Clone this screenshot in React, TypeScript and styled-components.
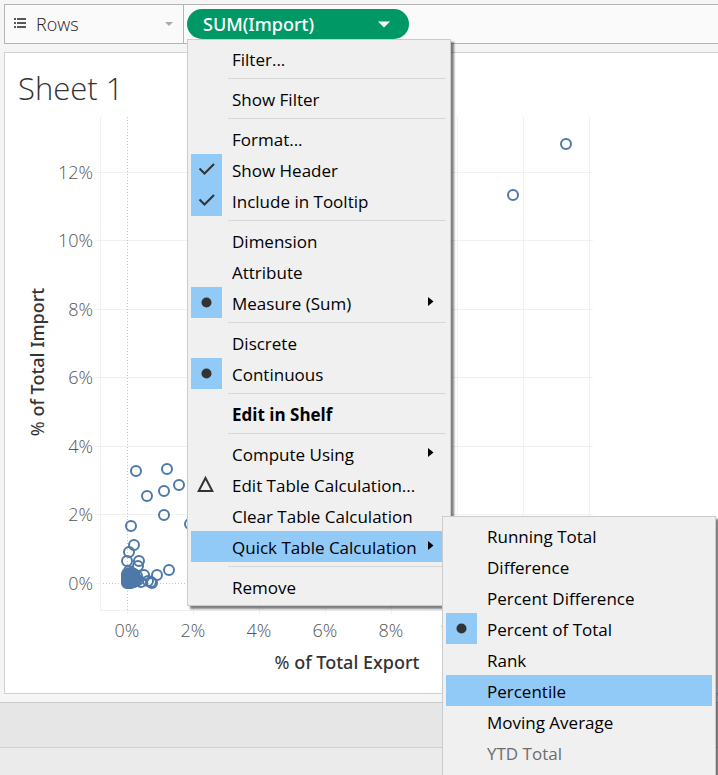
import React from 'react';
import styled, { createGlobalStyle, css } from 'styled-components';

const colors = {
  page: '#f5f5f5',
  menu: '#f0f0f0',
  highlight: '#91c9f7',
  pill: '#009966',
  mark: '#4e79a7',
  grid: '#f0f0f0',
};

const GlobalStyle = createGlobalStyle`
  * { box-sizing: border-box; }
  html, body { height: 100%; }
  body {
    margin: 0;
    overflow: hidden;
    background: ${colors.page};
    font-family: "Open Sans", "Noto Sans", sans-serif;
    color: #333;
  }
  button { font: inherit; color: inherit; border: 0; padding: 0; background: none; text-align: left; }
`;

const Page = styled.div`
  min-height: 100vh;
  display: flex;
  flex-direction: column;
`;

const Workspace = styled.main`
  display: flex;
  flex-direction: column;
  gap: 8px;
  padding: 4px 0 8px 4px;
`;

const Shelf = styled.section`
  display: flex;
  height: 40px;
  border: 1px solid #b4b4b4;
  border-right: 0;
  background: #fafafa;
`;

const ShelfLabel = styled.button`
  display: flex;
  align-items: center;
  width: 179px;
  padding: 0 10px 0 9px;
  gap: 10px;
  border-right: 1px solid #b4b4b4;
  color: #222;
  font-size: 18px;
  font-weight: 300;
`;

const ShelfName = styled.span`
  flex: 1;
`;

const ShelfBody = styled.div`
  flex: 1;
  padding: 4px 3px;
`;

const PillAnchor = styled.div`
  position: relative;
  width: 222px;
`;

const Pill = styled.button`
  display: flex;
  align-items: center;
  justify-content: space-between;
  width: 100%;
  height: 30px;
  padding: 0 19px 0 16px;
  border-radius: 15px;
  background: ${colors.pill};
  color: #fff;
  font-family: "Noto Sans", sans-serif;
  font-size: 18px;
  font-weight: 500;
`;

const menuSurface = css`
  position: absolute;
  padding: 3px;
  border: 1px solid #ccc;
  background: ${colors.menu};
  box-shadow: 3px 3px 2px rgba(0, 0, 0, 0.5);
  color: #000;
  font-size: 17px;
`;

const Menu = styled.div`
  ${menuSurface}
  top: 100%;
  left: 0;
  width: 264px;
  z-index: 1;
`;

const SubMenu = styled.div`
  ${menuSurface}
  top: -15px;
  left: 251px;
  width: 274px;
  padding-bottom: 40px;
  z-index: 2;
`;

const ItemSlot = styled.div`
  position: relative;
`;

const Item = styled.button<{ $active?: boolean; $strong?: boolean }>`
  display: flex;
  align-items: center;
  width: 100%;
  height: 31px;
  padding-right: 13px;
  gap: 10px;
  background: ${(p) => (p.$active ? colors.highlight : 'transparent')};
  font-weight: ${(p) => (p.$strong ? 700 : 400)};
  white-space: nowrap;

  &:disabled { color: #6d6d6d; }
`;

const Gutter = styled.span<{ $checked: boolean }>`
  display: flex;
  align-items: center;
  justify-content: center;
  width: 31px;
  height: 31px;
  background: ${(p) => (p.$checked ? colors.highlight : 'transparent')};
`;

const ItemText = styled.span`
  flex: 1;
  padding-top: 2px;
`;

const Separator = styled.hr`
  height: 1px;
  margin: 4px 1px 4px 37px;
  border: 0;
  background: #d7d7d7;
`;

const Sheet = styled.section`
  border: 1px solid #d0d0d0;
  border-right: 0;
  background: #fff;
`;

const SheetTitle = styled.h1`
  margin: 0;
  padding: 15px 13px 4px;
  font-size: 31px;
  line-height: 40px;
  font-weight: 300;
`;

const Chart = styled.svg`
  display: block;
  width: 600px;
  height: 581px;
`;

const Tick = styled.text`
  font-size: 18px;
  font-weight: 300;
  fill: #555;
`;

const AxisTitle = styled.text`
  font-family: "Noto Sans", sans-serif;
  font-size: 18px;
  font-weight: 500;
  fill: #333;
  text-anchor: middle;
`;

const AxisUnit = styled.tspan`
  font-weight: 400;
`;

const TabStrip = styled.footer`
  height: 46px;
  border-top: 1px solid #c8c8c8;
  border-bottom: 1px solid #d0d0d0;
  background: #e6e6e6;
`;

const StatusBar = styled.div`
  flex: 1;
  background: #ebebeb;
`;

const ListIcon = () => (
  <svg width="12" height="12" viewBox="0 0 12 12" fill="#5a5559" aria-hidden="true">
    <path d="M0 0h2v2H0zM3 0h9v2H3zM0 4h2v2H0zM3 4h9v2H3zM0 8h2v2H0zM3 8h9v2H3z" />
  </svg>
);

const ShelfCaret = () => (
  <svg width="8" height="4" viewBox="0 0 8 4" fill="#aaa" aria-hidden="true">
    <path d="M0 0h8L4 4z" />
  </svg>
);

const PillCaret = () => (
  <svg width="12" height="7" viewBox="0 0 12 7" fill="#fff" aria-hidden="true">
    <path d="M0 0.5h12L6 6.5z" />
  </svg>
);

const SubmenuArrow = () => (
  <svg width="6" height="11" viewBox="0 0 6 11" aria-hidden="true">
    <path d="M0 0l5.5 4.5L0 9z" />
  </svg>
);

type Mark = 'check' | 'dot' | 'delta';

const MarkIcon = ({ mark }: { mark: Mark }) => (
  <svg width="19" height="19" viewBox="0 0 19 19" fill="none" stroke="#333" strokeWidth="2" aria-hidden="true">
    {mark === 'check' && <path d="M2.5 8.5l5 5L17 4" />}
    {mark === 'dot' && <circle cx="9.5" cy="9.5" r="5" fill="#333" stroke="none" />}
    {mark === 'delta' && <path d="M8.5 3L15.3 16H1.7z" />}
  </svg>
);

type Entry = {
  text: string;
  mark?: Mark;
  strong?: boolean;
  active?: boolean;
  disabled?: boolean;
  submenu?: boolean;
  children?: Entry[];
};

const quickCalculations: Entry[] = [
  { text: 'Running Total' },
  { text: 'Difference' },
  { text: 'Percent Difference' },
  { text: 'Percent of Total', mark: 'dot' },
  { text: 'Rank' },
  { text: 'Percentile', active: true },
  { text: 'Moving Average' },
  { text: 'YTD Total', disabled: true },
];

const menuGroups: Entry[][] = [
  [{ text: 'Filter...' }],
  [{ text: 'Show Filter' }],
  [
    { text: 'Format...' },
    { text: 'Show Header', mark: 'check' },
    { text: 'Include in Tooltip', mark: 'check' },
  ],
  [{ text: 'Dimension' }, { text: 'Attribute' }, { text: 'Measure (Sum)', mark: 'dot', submenu: true }],
  [{ text: 'Discrete' }, { text: 'Continuous', mark: 'dot' }],
  [{ text: 'Edit in Shelf', strong: true }],
  [
    { text: 'Compute Using', submenu: true },
    { text: 'Edit Table Calculation...', mark: 'delta' },
    { text: 'Clear Table Calculation' },
    { text: 'Quick Table Calculation', active: true, submenu: true, children: quickCalculations },
  ],
  [{ text: 'Remove' }],
];

const MenuEntry = ({ entry }: { entry: Entry }) => {
  const checked = entry.mark === 'check' || entry.mark === 'dot';
  return (
    <ItemSlot>
      <Item
        type="button"
        role={checked ? 'menuitemcheckbox' : 'menuitem'}
        aria-checked={checked ? true : undefined}
        aria-haspopup={entry.submenu ? 'menu' : undefined}
        disabled={entry.disabled}
        $active={entry.active}
        $strong={entry.strong}
      >
        <Gutter $checked={checked}>{entry.mark && <MarkIcon mark={entry.mark} />}</Gutter>
        <ItemText>{entry.text}</ItemText>
        {entry.submenu && <SubmenuArrow />}
      </Item>
      {entry.children && (
        <SubMenu role="menu" aria-label={entry.text}>
          {entry.children.map((child) => (
            <MenuEntry key={child.text} entry={child} />
          ))}
        </SubMenu>
      )}
    </ItemSlot>
  );
};

const xAt = (percent: number) => 127 + percent * 33;
const yAt = (percent: number) => Math.floor(583 - percent * 34.25);
const crisp = (n: number) => Math.floor(n) + 0.5;
const yTicks = [0, 2, 4, 6, 8, 10, 12];
const xTicks = [0, 2, 4, 6, 8];

const points: [number, number][] = [
  [566, 144], [513, 195], [136, 471], [167, 469], [179, 485], [147, 496], [164, 491],
  [164, 515], [190, 524], [131, 526], [134, 545], [129, 552], [127, 561], [139, 561],
  [138, 566], [169, 570], [157, 575], [144, 575], [151, 582], [152, 583], [148, 581],
  [141, 582], [137, 576], [134, 574], [130, 573], [129, 571], [127, 574], [132, 577],
  [129, 578], [127, 578], [127, 583], [128, 583], [128, 582], [129, 580], [131, 581],
  [130, 583], [133, 580], [134, 582], [136, 581], [138, 580], [127, 581], [131, 578],
  [127, 579], [129, 575], [132, 573], [135, 578], [128, 576], [131, 575], [133, 578],
  [130, 581], [132, 582], [127, 576], [130, 577], [129, 583], [136, 579], [134, 576],
  [128, 580], [131, 583],
];

const ScatterPlot = () => (
  <Chart viewBox="5 112 600 581" role="img" aria-label="% of Total Import by % of Total Export">
    <g stroke={colors.grid} fill="none">
      {[2, 4, 6, 8, 10, 12, 14].map((t) => (
        <path key={t} d={`M${crisp(xAt(t))} 117V614`} />
      ))}
      {yTicks.slice(1).map((t) => (
        <path key={t} d={`M95 ${crisp(yAt(t))}H593`} />
      ))}
      <path d="M100.5 117V610.5H593M95 583.5H100M127.5 610V614" />
    </g>
    <path d="M127.5 117V610M103 583.5H593" stroke="#c4c4c4" strokeDasharray="1 2" fill="none" />
    <g stroke={colors.mark} strokeWidth="2" fill="none">
      {points.map(([x, y], i) => (
        <circle key={i} cx={x} cy={y} r="5" />
      ))}
    </g>
    {yTicks.map((t) => (
      <Tick key={t} x="93" y={yAt(t) + 7} textAnchor="end">{`${t}%`}</Tick>
    ))}
    {xTicks.map((t) => (
      <Tick key={t} x={xAt(t)} y="637" textAnchor="middle">{`${t}%`}</Tick>
    ))}
    <Tick x={xAt(10)} y="637" textAnchor="middle">10%</Tick>
    <AxisTitle x="347" y="669"><AxisUnit>%</AxisUnit> of Total Export</AxisTitle>
    <AxisTitle transform="translate(44 362) rotate(-90)"><AxisUnit>%</AxisUnit> of Total Import</AxisTitle>
  </Chart>
);

export default function App() {
  return (
    <Page>
      <GlobalStyle />
      <Workspace>
        <Shelf aria-label="Rows shelf">
          <ShelfLabel type="button">
            <ListIcon />
            <ShelfName>Rows</ShelfName>
            <ShelfCaret />
          </ShelfLabel>
          <ShelfBody>
            <PillAnchor>
              <Pill type="button" aria-haspopup="menu" aria-expanded="true">
                SUM(Import)
                <PillCaret />
              </Pill>
              <Menu role="menu" aria-label="SUM(Import)">
                {menuGroups.map((group, i) => (
                  <React.Fragment key={i}>
                    {i > 0 && <Separator />}
                    {group.map((entry) => (
                      <MenuEntry key={entry.text} entry={entry} />
                    ))}
                  </React.Fragment>
                ))}
              </Menu>
            </PillAnchor>
          </ShelfBody>
        </Shelf>
        <Sheet>
          <SheetTitle>Sheet 1</SheetTitle>
          <ScatterPlot />
        </Sheet>
      </Workspace>
      <TabStrip />
      <StatusBar />
    </Page>
  );
}
